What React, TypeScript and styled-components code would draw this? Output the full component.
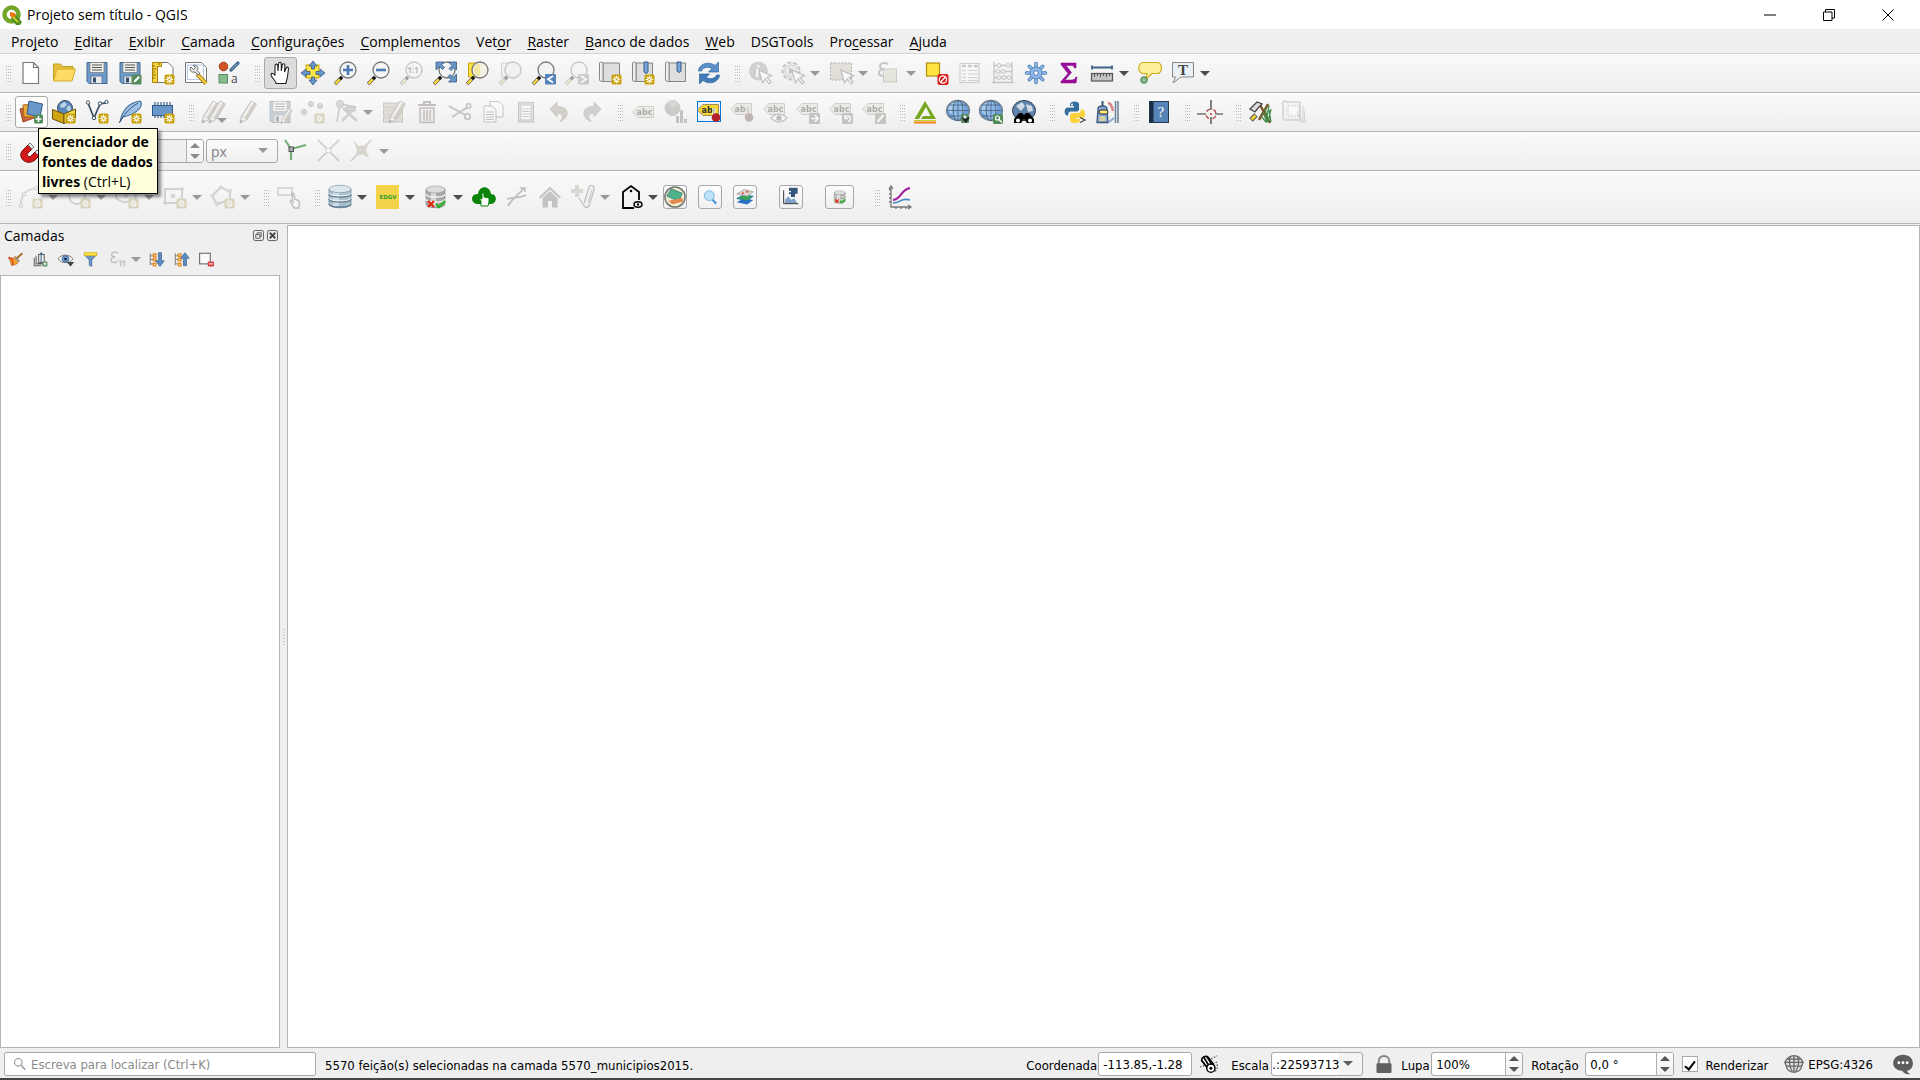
import React from "react";
import styled, { createGlobalStyle, css } from "styled-components";

const GlobalStyle = createGlobalStyle`
  *, *::before, *::after { box-sizing: border-box; }
  html, body, #root { height: 100%; }
  body { margin: 0; background: #efefef; color: #000; font-family: "Open Sans", "Noto Sans", sans-serif; font-size: 14px; overflow: hidden; }
  button, input, select { font: inherit; color: inherit; margin: 0; }
`;

/* ---------- icon artwork, drawn on a 24 x 24 grid ---------- */

const Star = () => (
  <g>
    <rect x="13.5" y="13.5" width="10" height="10" rx="1.5" fill="#c9a20a" />
    <path d="M18.5 14.8v7.4M14.8 18.5h7.4M16 16l5 5M21 16l-5 5" stroke="#fff" strokeWidth="1.2" />
    <circle cx="18.5" cy="18.5" r="1.1" fill="#c9a20a" />
  </g>
);
const Lens = ({ fill = "#f4f4f4" }: { fill?: string }) => (
  <g>
    <path d="M1 23l7-7" stroke="#555" strokeWidth="3.4" />
    <path d="M1.4 22.6l4.4-4.4" stroke="#ffd93b" strokeWidth="2.2" />
    <path d="M6 18l2-2" stroke="#111" strokeWidth="3" />
    <circle cx="14" cy="9" r="8" fill={fill} stroke="#777" strokeWidth="1.3" />
  </g>
);
const Arrow = ({ x = 0, y = 0 }: { x?: number; y?: number }) => (
  <path transform={`translate(${x} ${y})`} d="M11 9l3.400 13 2.800-4 4 5 2-2-4.200-4.600 4.600-1.600z" fill="#fff" stroke="#666" strokeWidth="1.1" />
);
const Floppy = () => (
  <g>
    <path d="M2 1.500h20v21H4l-2-2z" fill="#6f9bcb" stroke="#46698f" />
    <rect x="5" y="1.500" width="14" height="10" fill="#f1f1ee" stroke="#777" strokeWidth=".7" />
    <path d="M7 4h10M7 6.500h10M7 9h10" stroke="#555" />
    <rect x="6" y="15" width="11" height="7.500" fill="#e8e8e6" stroke="#46698f" strokeWidth=".7" />
    <rect x="8" y="16.500" width="3" height="5" fill="#35506f" />
  </g>
);
const Label = ({ text = "abc", fill = "#e3d9bb" }: { text?: string; fill?: string }) => (
  <g>
    <path d="M1 8.500l5-5h15.500v11H6L1 9.500z" fill={fill} stroke="#a08f60" />
    <text x="4.500" y="12" fontFamily="DejaVu Sans" fontWeight="700" fontSize="8" fill="#333">{text}</text>
  </g>
);
const Globe = () => (
  <g>
    <ellipse cx="12" cy="10.500" rx="11.500" ry="10" fill="#6d9fd8" stroke="#76838f" strokeWidth="1.3" />
    <ellipse cx="10.500" cy="9" rx="8" ry="7" fill="#a9cdf2" />
    <ellipse cx="12" cy="10.500" rx="5" ry="10" fill="#8fbbea" stroke="#47617b" strokeWidth="1" />
    <path d="M1 10.500h22M12 .5v20M3 5h18M3 16h18" stroke="#47617b" strokeWidth=".8" fill="none" />
  </g>
);
const MapSheet = () => (
  <g>
    <path d="M5 2h16.500v18.500H5z" fill="#dedede" stroke="#858585" />
    <path d="M5 20.500H3.500a2 2 0 0 1-2-2V2a2 2 0 0 1 3.500 0z" fill="#f0f0f0" stroke="#858585" />
  </g>
);
const Disk = () => (
  <g>
    <path d="M2 4v15c0 5 19 5 19 0V4z" fill="#a9a9a9" stroke="#777" strokeWidth=".6" />
    <path d="M7 5v17h5V5z" fill="#d8d8d8" />
    <path d="M2 9c0 4 19 4 19 0M2 14c0 4 19 4 19 0" fill="none" stroke="#f3f3f3" strokeWidth="1.300" />
    <ellipse cx="11.500" cy="4.500" rx="9.500" ry="3.500" fill="#dcdcdc" stroke="#999" strokeWidth=".6" />
    <path d="M4 16l6 6M10 16l-6 6" stroke="#df2b0b" strokeWidth="2.200" />
    <path d="M12 19l3 3 6-6" fill="none" stroke="#27b321" strokeWidth="2.400" />
  </g>
);
const Pencil = ({ x = 0 }: { x?: number }) => (
  <g transform={`translate(${x} 0)`}>
    <path d="M3 23l1.500-7L14 1l5.500 3-9 15z" fill="#d0bd82" stroke="#777" />
    <path d="M3 23l1.500-7 6 3z" fill="#eee" stroke="#777" strokeWidth=".8" />
    <path d="M3 23l.8-3.300 2 1.200z" fill="#333" />
    <path d="M6.500 17l9-15" stroke="#fff" strokeWidth="1.300" />
    <path d="M9 18.500l9-15" stroke="#8a7a50" strokeWidth="1.300" />
  </g>
);
const Tree = ({ up }: { up?: boolean }) => (
  <g>
    <path d="M2 2v19M2 6h5M2 12h5M2 19h5" stroke="#777" strokeWidth="1.500" fill="none" />
    <g fill="#fff" stroke="#e88b1c" strokeWidth="2.200">
      <rect x="7" y="3" width="4" height="4" /><rect x="7" y="10" width="4" height="4" /><rect x="7" y="18" width="4" height="4" />
    </g>
    <path d={up ? "M15 22V10h-4.500l7-9L24.500 10H20v12z" : "M15 1v13h-4.500l7 9 7-9H20V1z"} fill="#5b8ac0" stroke="#335a86" />
  </g>
);

const art: Record<string, React.ReactNode> = {
  page: <path d="M4 1.500h10.500l5 5v16H4zM14.500 1.500v5h5" fill="#fff" stroke="#777" strokeWidth="1.200" />,
  folder: <><path d="M1.500 20V3h7l2 2.500H21V9" fill="#e6c03c" stroke="#c09b22" /><path d="M1.500 20L5 8h18.500L20 20z" fill="#fddc63" stroke="#d4ac2b" /></>,
  save: <Floppy />,
  saveAs: <><Floppy /><rect x="13.500" y="13.500" width="10" height="10" rx="1.500" fill="#538b5b" /><path d="M15.500 21.500l1-2.500 4-4 1.500 1.500-4 4z" fill="#fff" /></>,
  layout: <><path d="M6 1.500h11l5 5v15H6z" fill="#fff" stroke="#777" /><path d="M1.500 1.500h9v4h-4v16h-5z" fill="#f5d13b" stroke="#a88309" /><path d="M2 5h2M2 8h3M2 11h2M2 14h3M2 17h2M8 2v2" stroke="#8a6d10" /><Star /></>,
  manager: <><path d="M1.500 1.500h16l5 5v15h-21z" fill="#fff" stroke="#777" /><rect x="3.500" y="4" width="16" height="14.500" fill="#fff" stroke="#b4c8e8" /><path d="M13 13l9 9.500" stroke="#a98414" strokeWidth="4" /><path d="M13.500 13.500l8.500 9" stroke="#f3d24a" strokeWidth="2" /><path d="M14 14l-3-3c-4 1-6-2-4-5l2.500 2.500 2-2L9 4.500c4-1.500 6 2 4 5l3 3z" fill="#e6e6e6" stroke="#666" /></>,
  style: <><circle cx="6.500" cy="5.500" r="4.300" fill="#cf5527" stroke="#a33f18" /><path d="M14 9l7-7" stroke="#46698f" strokeWidth="3.200" strokeLinecap="round" /><path d="M14.500 8.500l6-6" stroke="#7ea9d8" strokeWidth="1" /><rect x="2" y="13.500" width="8.500" height="8.500" fill="#86bb8b" stroke="#5c8a61" /><text x="14" y="22" fontFamily="Open Sans" fontSize="12" fill="#444">a</text></>,
  hand: <path d="M8 22.500c0-3-5-6-5-9 0-2 3-1 4 1V5c0-2.500 2.500-2.500 2.700 0L10 10l.5-7c.2-2.400 2.800-2.200 2.800 0v7l1-6c.5-2 2.700-1.500 2.600.5L16.500 11l1.700-4c.8-1.500 2.500-.8 2.300 1l-1 7.500c-.3 3-1.500 4-1.500 7z" fill="#fff" stroke="#222" strokeWidth="1.100" />,
  panSel: <><rect x="5" y="4" width="13" height="13" fill="#fde443" stroke="#c9a20a" /><path d="M12 0l4 5h-2.500v3h-3V5H8zM12 24l4-5h-2.500v-3h-3v3H8zM0 12l5-4v2.500h4v3H5V16zM24 12l-5-4v2.500h-4v3h4V16z" fill="#6a97c9" stroke="#355a83" strokeWidth=".8" /></>,
  zoomIn: <><Lens /><path d="M14 4v10M9 9h10" stroke="#4a7bb4" strokeWidth="2.600" /></>,
  zoomOut: <><Lens /><path d="M9 9h10" stroke="#4a7bb4" strokeWidth="2.600" /></>,
  zoom1: <><Lens /><text x="7.500" y="12" fontFamily="Open Sans" fontWeight="700" fontSize="8" fill="#555">1:1</text></>,
  zoomFull: <><Lens /><path d="M3 1h8L8.500 3.500l3 3-2 2-3-3L3 9zM23.500 1v8L21 6.500l-3 3-2-2 3-3L15.500 1zM23.500 21h-8l2.500-2.500-3-3 2-2 3 3 3.500-3.500z" fill="#6a97c9" stroke="#355a83" strokeWidth=".8" /></>,
  zoomSel: <><path d="M2.500 2h10v14h-10z" fill="#fde443" stroke="#c9a20a" /><Lens fill="#f4f1e4" /><path d="M14 3v12a6 6 0 0 1 0-12" fill="#f3e7a4" /></>,
  zoomLayer: <><path d="M2.500 2h10v14h-10z" fill="#e8e8e8" stroke="#999" /><Lens fill="#ececec" /></>,
  zoomPrev: <><Lens /><rect x="13" y="13" width="11" height="10.500" rx="1" fill="#5484bb" /><path d="M21 15l-5 3.200 5 3.200" stroke="#fff" strokeWidth="1.800" fill="none" /></>,
  zoomNext: <><Lens /><rect x="13" y="13" width="11" height="10.500" rx="1" fill="#8b8b8b" /><path d="M16 15l5 3.200-5 3.200" stroke="#fff" strokeWidth="1.800" fill="none" /></>,
  newMap: <><MapSheet /><Star /></>,
  newMark: <><MapSheet /><path d="M13 1h4v10l-2 1.500-2-1.500z" fill="#7ba7d8" stroke="#355a83" /><Star /></>,
  marks: <><MapSheet /><path d="M13 1h4v9l-2 1.500-2-1.500z" fill="#7ba7d8" stroke="#355a83" /></>,
  refresh: <><path d="M1.500 10C2 3 11-.5 18 4.500L21.500 1v10h-10l3.500-3.500C10 5 5 7 4.500 10z" fill="#5a8fc8" stroke="#2f659e" strokeWidth=".7" /><path d="M22.500 14C22 21 13 24.500 6 19.500L2.500 23V13h10L9 16.500c5 2.500 10 .5 10.500-2.500z" fill="#407bb8" stroke="#2f659e" strokeWidth=".7" /></>,
  identify: <><circle cx="10.500" cy="10" r="9.500" fill="#8d979f" /><text x="7" y="16" fontFamily="Liberation Serif" fontSize="17" fontWeight="700" fontStyle="italic" fill="#fff">i</text><Arrow /></>,
  action: <><circle cx="10" cy="10" r="8.500" fill="#eee" stroke="#777" strokeWidth="2" strokeDasharray="4 2" /><circle cx="10" cy="10" r="6" fill="#ddd" stroke="#888" /><path d="M8 6.500v7l6-3.500z" fill="#777" /><Arrow /></>,
  select: <><rect x="1.500" y="2" width="21" height="17" fill="#cabd92" stroke="#444" strokeDasharray="2 1.500" /><Arrow x={1} /></>,
  expr: <><path d="M11 3C8 1 3 2 3 5s3 3 5 3c-3 0-6 1-6 4s5 4 9 2" fill="none" stroke="#777" strokeWidth="2" /><rect x="6.500" y="8" width="13" height="13" fill="#d6cba2" stroke="#9c8f68" /></>,
  deselect: <><rect x="1.500" y="2" width="13" height="13" fill="#fde443" stroke="#b3920f" strokeWidth="1.200" /><rect x="12.500" y="13" width="11" height="11" rx="2" fill="#d81e1e" /><circle cx="18" cy="18.500" r="3.600" fill="none" stroke="#fff" strokeWidth="1.200" /><path d="M15.500 21l5-5" stroke="#fff" strokeWidth="1.200" /></>,
  table: <><rect x="2" y="2.500" width="19" height="19" fill="#fafafa" stroke="#888" /><path d="M4 5h4M10 5h4M16 5h4" stroke="#888" strokeWidth="2.500" /><path d="M4 9.500h4M10 9.500h10M4 13h4M10 13h10M4 16.500h4M10 16.500h10M4 19.500h4M10 19.500h10" stroke="#999" /></>,
  abacus: <><path d="M3 1v20M21 1v20M1 21.500h22M3 4.500h18M3 10.500h18M3 16.500h18" stroke="#777" strokeWidth="1.300" /><g fill="#eee" stroke="#777"><circle cx="8" cy="4.500" r="2" /><circle cx="17" cy="4.500" r="2" /><circle cx="7" cy="10.500" r="2" /><circle cx="12" cy="10.500" r="2" /><circle cx="8" cy="16.500" r="2" /><circle cx="13" cy="16.500" r="2" /><circle cx="18" cy="16.500" r="2" /></g></>,
  gear: <><g stroke="#4d7db6" strokeWidth="3.600" strokeLinecap="round"><path d="M12 2.500v19M2.500 12h19M5.300 5.300l13.400 13.400M18.700 5.300L5.300 18.700" /></g><g stroke="#8db7e8" strokeWidth="2" strokeLinecap="round"><path d="M12 2.500v19M2.500 12h19M5.300 5.300l13.400 13.400M18.700 5.300L5.300 18.700" /></g><circle cx="12" cy="12" r="6" fill="#8db7e8" stroke="#4d7db6" strokeWidth=".8" /><circle cx="12" cy="12" r="2.300" fill="#fff" stroke="#4d7db6" /></>,
  sigma: <path d="M4 2h15v5h-1.500c-.5-2-1.500-2.500-4-2.500H9l5.500 7L8 19h6.500c2.500 0 3.500-1 4.500-3h1l-1 6H4v-1.500l7-8L4 3.500z" fill="#9d0b9d" stroke="#7b087b" strokeWidth=".5" />,
  ruler: <><path d="M2 6.500h20M2 4.500v4M22 4.500v4" stroke="#3e6288" strokeWidth="1.800" /><rect x="1.500" y="12.500" width="21" height="7.500" fill="#c4c4c4" stroke="#555" strokeWidth="1.200" /><path d="M4.500 13v3M7.500 13v2M10.500 13v3M13.500 13v2M16.500 13v3M19.500 13v2" stroke="#555" /></>,
  tip: <><path d="M5 1.500h14c6 0 6 11 0 11h-5L7 19l2-6.500H5c-6 0-5-11 0-11z" fill="#fdef9b" stroke="#cda91c" strokeWidth="1.200" /><circle cx="6" cy="19" r="3.300" fill="#86bb8b" stroke="#4c7752" /></>,
  annot: <><path d="M1.500 1.500h21v14.500H10L2 22l2.500-6h-3z" fill="#e9f1f7" stroke="#888" /><text x="7" y="13.500" fontFamily="Liberation Serif" fontSize="15" fontWeight="700" fill="#444">T</text></>,

  source: <><path d="M1 9l10-3 4 12-11 4z" fill="#c8643c" stroke="#96441f" /><path d="M4 5l12-1 1 13H5z" fill="#eea83c" stroke="#a56a12" /><path d="M10 1l13.500 3-2.500 13-13-3z" fill="#6a97c9" stroke="#335a86" /><rect x="15" y="14.500" width="9" height="9" rx="1.500" fill="#538b5b" /><path d="M19.500 16v6M16.500 19h6" stroke="#fff" strokeWidth="1.600" /></>,
  geopkg: <><circle cx="13" cy="8" r="7.500" fill="#5c87b5" stroke="#34506e" /><path d="M8 5l4-3 3 2-2 3-4 1zM14 9l3-4 2 3-1 4z" fill="#bcd3ea" /><path d="M.5 9.500l11.500 4.500v9.500L.5 19z" fill="#d0a513" stroke="#6d540a" /><path d="M12 14l11.500-5v9L12 23.500z" fill="#f6dc50" stroke="#6d540a" /><Star /></>,
  shape: <><path d="M3 3l6 15L15 4c2-2 4 1 6-2" fill="none" stroke="#3b4f63" strokeWidth="1.700" /><g fill="#fff" stroke="#3b4f63"><circle cx="3" cy="2.500" r="1.700" /><circle cx="9" cy="18" r="1.700" /><circle cx="15" cy="3.500" r="1.700" /><circle cx="21.500" cy="2" r="1.700" /></g><Star /></>,
  feather: <><path d="M2 22C4 11 9 3 22 1c2 1 2 5-1 8-4 5-11 7-16 8z" fill="#9cc0e6" stroke="#466b92" strokeWidth="1.100" /><path d="M1 23C6 15 11 8 20 3" fill="none" stroke="#355a83" /><Star /></>,
  chip: <><path d="M4 2v16M7 2v16M10 2v16M13 2v16M16 2v16M19 2v16" stroke="#46698f" strokeWidth="1.300" /><rect x="1.500" y="5.500" width="20" height="10" fill="#6a97c9" stroke="#335a86" /><Star /></>,
  pencils: <><Pencil x={-3} /><Pencil x={4} /></>,
  pencil: <Pencil x={2} />,
  saveEdit: <><Floppy /><g transform="translate(11 8) scale(.68)"><Pencil /></g></>,
  points: <><g fill="#aaa" stroke="#777"><circle cx="3" cy="12" r="2.500" /><circle cx="10" cy="4" r="2.500" /><circle cx="19" cy="6" r="2.500" /></g><Star /></>,
  vertex: <><path d="M3 22L6 4l16 3" stroke="#888" strokeWidth="1.500" fill="none" /><path d="M9 8l14 13M20 9L8 21" stroke="#999" strokeWidth="2.800" /><g fill="#aaa" stroke="#777"><circle cx="6" cy="4" r="3.500" /><path d="M12 7h9v4h-9z" /></g></>,
  editRows: <><g fill="#cbbc8a" stroke="#8f8358"><rect x="1.500" y="3" width="19" height="5" /><rect x="1.500" y="10" width="19" height="5" /><rect x="1.500" y="17" width="19" height="5" /></g><g transform="translate(4 0)"><Pencil /></g></>,
  trash: <><path d="M3 5h18M9 4V2h6v2" stroke="#82655a" strokeWidth="2" fill="none" /><path d="M5 8h14v14.500H5zM9 10v11M12 10v11M15 10v11" fill="#ede4e0" stroke="#82655a" strokeWidth="1.500" /></>,
  cut: <><path d="M1 6l16 9M4 17L20 7" stroke="#777" strokeWidth="2" /><circle cx="19.500" cy="16.500" r="2.800" fill="none" stroke="#777" strokeWidth="1.700" /><circle cx="20.500" cy="6" r="2.300" fill="none" stroke="#777" strokeWidth="1.500" /></>,
  copy: <><path d="M9 1.500h9l4 4V17H9z" fill="#fff" stroke="#777" /><path d="M3 6h8l4 4v12H3z" fill="#fff" stroke="#777" /><path d="M5 12h8M5 14.500h8M5 17h8M5 19.500h8" stroke="#777" /></>,
  paste: <><rect x="4.500" y="2.500" width="15" height="19.500" fill="#ccc4a8" stroke="#777" /><rect x="7" y="5" width="10" height="15" fill="#fff" stroke="#888" /><path d="M9 1.500h6v3H9z" fill="#aaa" /><path d="M8.500 9h7M8.500 11.500h7M8.500 14h7M8.500 16.500h7" stroke="#888" /></>,
  undo: <path d="M3 9l7-7v4.500c7 0 11 3 10 8-1 4-4 6-7 7 4-5 3-8-3-8V17z" fill="#a89566" stroke="#857552" strokeWidth=".8" />,
  redo: <path d="M21 9l-7-7v4.500c-7 0-11 3-10 8 1 4 4 6 7 7-4-5-3-8 3-8V17z" fill="#999" stroke="#777" strokeWidth=".8" />,
  label: <g transform="translate(1 3)"><Label /></g>,
  diagram: <><circle cx="8.500" cy="8" r="7.500" fill="#808c78" stroke="#888" /><path d="M8.500 8L3 3a7 7 0 0 1 11 1z" fill="#c39b9b" /><path d="M12 23v-7h3v7M16 23V10h3v13M20 23v-4h3v4z" fill="#777" /></>,
  labelPin: <><rect x=".5" y="1.500" width="23" height="20" fill="#edf4fa" stroke="#0078d7" /><g transform="translate(0 1)"><Label text="ab" fill="#f6d72c" /></g><path d="M17 8v8" stroke="#fff" strokeWidth="3" /><path d="M17 8v8" stroke="#888" strokeWidth="1" /><circle cx="19" cy="17.500" r="4.300" fill="#b31f26" /></>,
  labelPin2: <><Label text="ab" /><path d="M18 7v9" stroke="#999" strokeWidth="2" /><circle cx="19" cy="17.500" r="4.300" fill="#8c4b4b" /></>,
  labelEye: <><Label /><path d="M8 18c5-5 11-5 16 0-5 5-11 5-16 0z" fill="#fff" stroke="#777" strokeWidth="1.300" /><circle cx="16" cy="18" r="2.700" fill="#666" /></>,
  labelMove: <><Label /><rect x="13" y="13" width="11" height="11" rx="1.500" fill="#777" /><path d="M15 18.500h7M19 15l3 3.500-3 3.500" stroke="#fff" strokeWidth="1.700" fill="none" /></>,
  labelTurn: <><Label /><rect x="13" y="13" width="11" height="11" rx="1.500" fill="#777" /><path d="M16 18a2.800 2.800 0 1 1 3 3.500M16 15v3.500h3" stroke="#fff" strokeWidth="1.500" fill="none" /></>,
  labelEdit: <><Label /><rect x="13" y="13" width="11" height="11" rx="1.500" fill="#857a58" /><path d="M15.500 22l6-7" stroke="#fff" strokeWidth="2.200" /></>,
  plane: <><path d="M12 1L1.500 19H6l7-12 4.500 9H10l-2 3h15z" fill="#78a81f" /><path d="M1 20h22v1H1z" fill="#c6cf29" /><path d="M1 21.500h22v2H1z" fill="#f08019" /></>,
  globeAdd: <><Globe /><rect x="15" y="14" width="8" height="9" rx="1.500" fill="#4f8958" /><path d="M15.500 17.500h8.500l-4.200 5.500z" fill="#222" /><path d="M19 15v4M17 17h4" stroke="#fff" /></>,
  globeFind: <><Globe /><rect x="14" y="14" width="10" height="10" rx="1.500" fill="#538b5b" /><circle cx="18.500" cy="18" r="2" fill="none" stroke="#fff" strokeWidth="1.200" /><path d="M20 19.500l3 3" stroke="#fff" strokeWidth="1.400" /></>,
  binoc: <><ellipse cx="12" cy="10.500" rx="11.500" ry="10" fill="#5f83a8" stroke="#263f5a" /><path d="M4 6l6-4 3 4-4 5zM14 4l6 2 1 5-5 1z" fill="#d0dbe6" /><path d="M7 13h3l2 2 2-2h3l5 6v4h-7l-3-4-3 4H2v-4z" fill="#000" /><circle cx="6" cy="20.500" r="2" fill="#fff" /><circle cx="18" cy="20.500" r="2" fill="#fff" /></>,
  python: <><path d="M8 2.500c3-2 8-1 8 1.500v5c0 2-1 2.500-3 2.500H8c-2 0-3 1-3 4-4 1-5-8 0-8h6V6H7V4z" fill="#366f9e" /><path d="M16 22c-3 2-9 1-9-1.500v-4C7 14 8 13 10 13h5c2 0 3-1 3-4 5 0 6 9 1 9h-6v1h4v2z" fill="#fbd13c" /><circle cx="9" cy="4.500" r="1" fill="#fff" /><path d="M17 17.500l5 2.500-5 2.500" fill="none" stroke="#444" strokeWidth="1.300" /></>,
  robot: <><path d="M6.500 7V1" stroke="#3b5876" strokeWidth="2" /><path d="M2 9c0-4 9-4 9 0l1 13.500H1z" fill="#8da9d9" stroke="#3b5876" strokeWidth="1.300" /><rect x="3" y="10" width="9" height="4" rx="2" fill="#ffed80" stroke="#222" /><path d="M3.500 17.500h6M3.500 20h6" stroke="#ffed80" strokeWidth="1.500" /><path d="M12 3c3 0 4 4 5 8" stroke="#d88484" strokeWidth="2.500" fill="none" /><path d="M19.500 1v22M22 1v22" stroke="#70859c" strokeWidth="1.600" /><path d="M13 22l5-4" stroke="#8da9c9" strokeWidth="2" /></>,
  help: <><rect x="2.500" y="1.500" width="19" height="21" fill="#5684b6" stroke="#233a52" /><rect x="2.500" y="1.500" width="4" height="21" fill="#1c2d43" /><text x="10.500" y="17" fontFamily="Liberation Serif" fontSize="15" fill="#fff">?</text></>,
  cross: <><circle cx="13" cy="14" r="5" fill="none" stroke="#b75050" strokeWidth="1.500" strokeDasharray="4 3.850" strokeDashoffset="-2" /><path d="M13 0v10M13 17v7M-1 14h9M17 14h8" stroke="#333" strokeWidth="1.200" /><circle cx="13" cy="14" r="1" fill="#b33" /></>,
  hammer: <><path d="M10 20c3-6 6-10 9-16M11 5l10 18" stroke="#835627" strokeWidth="2.500" /><path d="M1 9l7-7 5 2-4 4-3 4z" fill="#ddd" stroke="#444" strokeWidth="1.300" /><path d="M2 20l5-5" stroke="#555" strokeWidth="5" /><path d="M2.500 19.500l4-4" stroke="#e8d332" strokeWidth="3" /><path d="M14 12l4 10M16 8l3 14M20 5l-3 18M22 9l-3 13M12 16l5 6M20 10l2 12" stroke="#3f8a48" strokeWidth="1.300" /></>,
  scroll: <><path d="M5 2h13v18H5H3a2 2 0 0 1-2-2V5a2 2 0 0 1 4-3z" fill="#eee" stroke="#999" strokeWidth="1.400" /><rect x="6" y="6" width="11" height="10" fill="#fff" stroke="#999" strokeDasharray="2 1" /><path d="M18 5v17M21 6v17M15 12l5 10M22 10l1 13" stroke="#999" /></>,

  magnet: <><path d="M4 11l5-5 4 4-4 4c-2 2 1 5 3 3l4-4 4 4-4 4c-8 7-19-3-12-10z" fill="#d31818" stroke="#7c0b0b" /><path d="M9 6l2-2 4 4-2 2zM16 13l2-2 4 4-2 2z" fill="#eee" stroke="#777" /></>,
  trace: <><path d="M1 1l6 9v11M7 10l15-4" fill="none" stroke="#75ae78" strokeWidth="2.200" /><rect x="5" y="8" width="4.500" height="4.500" fill="#aaa" stroke="#555" /></>,
  crossing: <><path d="M1 1l21 21M22 1L1 22" stroke="#888" strokeWidth="1.700" /><circle cx="11.500" cy="11.500" r="2.500" fill="#fff" stroke="#999" /></>,
  selfSnap: <><path d="M1 22L21 1" stroke="#888" strokeWidth="1.500" /><path d="M3 2l6 5 7-1 3-3-3 8 3 8-6-4-8 3 2-8z" fill="#b3a47a" /></>,
  arc: <><path d="M2 22C1 12 5 5 17 3" fill="none" stroke="#999" strokeWidth="1.700" /><g fill="#fff" stroke="#888"><circle cx="2" cy="21" r="1.800" /><circle cx="5" cy="9" r="1.800" /><circle cx="17" cy="3" r="1.800" /></g><Star /></>,
  circle: <><circle cx="10" cy="11" r="8" fill="none" stroke="#999" strokeWidth="2" /><Star /></>,
  ellipse: <><ellipse cx="11" cy="11" rx="10" ry="6" fill="none" stroke="#999" strokeWidth="2" /><circle cx="11" cy="11" r="2" fill="#aaa" /><Star /></>,
  rect: <><rect x="2" y="4" width="17" height="14" fill="none" stroke="#999" strokeWidth="2" /><rect x="8" y="9" width="4" height="4" fill="#aaa" /><circle cx="19" cy="4" r="1.800" fill="#999" /><circle cx="2" cy="18" r="1.800" fill="#999" /><Star /></>,
  poly: <><path d="M10 2l9 5v8l-13 4-5-8z" fill="none" stroke="#999" strokeWidth="2" /><g fill="#bbb" stroke="#999"><circle cx="10" cy="2.500" r="1.600" /><circle cx="19" cy="6" r="1.600" /><circle cx="1.500" cy="11" r="1.600" /><circle cx="6" cy="19" r="1.600" /></g><Star /></>,
  pick: <><rect x="1" y="3" width="14" height="7" fill="#fafafa" stroke="#888" strokeWidth="1.400" /><path d="M13 16c1-2 2 0 3 1l-1-8c1-2 2-1 2 1l1 4 4 2c1 3 0 5 0 7h-5z" fill="#fff" stroke="#666" strokeWidth="1.400" /><path d="M15 8v3" stroke="#c33" /></>,
  db: <><path d="M1 4v15c0 5 22 5 22 0V4z" fill="#a9bfcd" stroke="#60798a" strokeWidth=".7" /><path d="M5 5v17h6V5z" fill="#cfdde6" /><path d="M1 9c0 4 22 4 22 0M1 14c0 4 22 4 22 0M1 19c0 4 22 4 22 0" fill="none" stroke="#637d90" strokeWidth="1.300" /><path d="M1 7.800c0 4 22 4 22 0M1 12.800c0 4 22 4 22 0" fill="none" stroke="#eef4f8" strokeWidth="1" /><ellipse cx="12" cy="4" rx="11" ry="3.700" fill="#dde7ee" stroke="#8195a3" strokeWidth=".7" /></>,
  edgv: <><rect width="23" height="24" fill="#f2d34a" /><text x="3.500" y="14" fontFamily="DejaVu Sans" fontSize="5.500" fontWeight="700" fill="#2ca02c">EDGV</text></>,
  disk: <Disk />,
  cloud: <><path d="M6 19c-8 0-8-11 0-10 1-9 12-9 13 0 7 0 6 10 0 10z" fill="#0b840b" /><path d="M9 21v-5l-2-3 3 1V8h2v4l5 1v4l-1 4z" fill="#fff" stroke="#0b840b" /></>,
  split: <><path d="M3 21C8 12 14 10 19 3M2 14c6-2 14-1 19-4" fill="none" stroke="#666" strokeWidth="1.700" /><path d="M15 3h5v4" fill="none" stroke="#666" strokeWidth="1.500" /></>,
  home: <path d="M12 1.500L1 12l1.500 1.500L12 4.500l9.500 9L23 12zM4.500 13v9.500H10V16h4v6.500h5.500V13L12 6z" fill="#777" />,
  addPen: <><path d="M4 0h4v4h4v4H8v4H4V8H0V4h4z" fill="#b3a98c" /><path d="M8 13l6 9c2 1 3 0 4-1l5-16c1-4-3-6-5-3l-5 16" fill="#efece4" stroke="#666" strokeWidth="1.200" /><path d="M17 18l4-13" stroke="#777" /></>,
  tag: <><path d="M20 15V7l-8-6-8 6v16h11" fill="none" stroke="#000" strokeWidth="1.800" /><circle cx="12" cy="6" r="1.300" fill="#000" /><ellipse cx="19" cy="19.500" rx="4" ry="2.700" fill="#fff" stroke="#000" strokeWidth="1.500" /><circle cx="19" cy="19.500" r="1.200" fill="#000" /></>,
  plot: <><path d="M3 1v21h20M1 5h2M1 9h2M1 13h2M1 17h2M8 22v2M13 22v2M18 22v2M1 4l2-3 2 3M20 20l3 2-3 2" fill="none" stroke="#777" strokeWidth="1.300" /><path d="M5 15c9-1 7-10 17-12" fill="none" stroke="#a2179b" strokeWidth="2" /><path d="M5 18c8 0 8-6 17-3" fill="none" stroke="#4688c2" strokeWidth="1.700" /></>,
  terrain: <><circle cx="12" cy="12" r="11" fill="#eeedce" stroke="#777" strokeWidth="1.700" /><path d="M3 11l5-8 12 5-4 9z" fill="#4db289" stroke="#2c6b70" strokeWidth=".7" /><path d="M5 16l15-3 1 4-12 3z" fill="#e3874d" /></>,
  search: <><path d="M15 15l6 7" stroke="#4a94df" strokeWidth="3.400" /><circle cx="10" cy="9" r="8" fill="#bde2fa" stroke="#79b5e0" strokeWidth="1.500" /></>,
  layers: <><path d="M1 19l9-5 13 2-8 6z" fill="#2870c4" /><path d="M1 14l9-5 13 2-8 6z" fill="#39a259" stroke="#1f70b6" /><path d="M1 8l10-6 12 3-8 6z" fill="#ddd5d0" stroke="#999" /><circle cx="9" cy="7" r="1.300" fill="#d33" /><circle cx="15" cy="5" r="1.300" fill="#d33" /></>,
  histo: <><path d="M1 2v20h22" fill="none" stroke="#333" strokeWidth="1.500" /><path d="M3 21v-5l5-5 4 5 5-2 4 7z" fill="#7fa3c8" /><path d="M9-2h13v9h-4v5h-6V8H9V5h3V3H9z" fill="#34557c" /></>,

  brush: <><path d="M13 11l10-9" stroke="#a66924" strokeWidth="3" /><path d="M1 8l7 2 4-3 6 7-4 5-8 3z" fill="#f3a52e" stroke="#b4541c" /><path d="M1 9l6 3 1 9" stroke="#e54b2c" strokeWidth="2.500" fill="none" /><path d="M11 9l6 6" stroke="#6a97c9" strokeWidth="2" /></>,
  addGroup: <><path d="M2 9v13h11M5 6v13h12M9 4h9v13H9z" fill="none" stroke="#666" strokeWidth="1.700" /><path d="M13 1v15M10 4l3-3 3 3" stroke="#355a83" strokeWidth="1.500" fill="none" /><rect x="15" y="15" width="8" height="8" rx="1" fill="#538b5b" /><path d="M19 16v6M16 19h6" stroke="#fff" strokeWidth="1.400" /></>,
  eye: <><path d="M0 11C5 3 19 3 24 11c-5 8-19 8-24 0z" fill="#f2f2f2" stroke="#777" strokeWidth="1.500" /><circle cx="12" cy="11" r="5.500" fill="#6a97c9" stroke="#355a83" /><circle cx="12" cy="11" r="2" fill="#112" /><path d="M14 16h12l-6 7z" fill="#444" /></>,
  funnel: <><path d="M2 4h20l-8 9v10l-4-2v-8z" fill="#6a97c9" stroke="#335a86" /><path d="M2 1h20v5H2z" fill="#fde443" stroke="#c9a20a" /></>,
  exprFilter: <><path d="M11 2C8-1 1 0 1 4s4 4 6 4c-3 0-7 1-7 5s6 5 10 2" fill="none" stroke="#777" strokeWidth="2.200" /><path d="M12 15v-2h11v10h-3v-6h-3v6h-3v-8z" fill="#999" /></>,
  expand: <Tree />,
  collapse: <Tree up />,
  remove: <><rect x="1" y="2" width="17" height="17" fill="#fafafa" stroke="#666" strokeWidth="1.700" /><rect x="14" y="15" width="10" height="8" rx="1.500" fill="#d94040" /><path d="M16 19h6" stroke="#fff" strokeWidth="1.600" /></>,
  extents: <><path d="M2 7c0-4 6-7 9-4l7 9c1 5-5 8-8 5z" fill="#fff" stroke="#000" strokeWidth="2" /><path d="M5 3l8 13M9 2l7 11M2 7l7 9" stroke="#000" strokeWidth="2.200" /><circle cx="14.500" cy="17.500" r="5.500" fill="#fff" stroke="#000" strokeWidth="2" /><circle cx="14.500" cy="17.500" r="2" fill="#000" /><path d="M15 5l8-4M0 16l6-2M21 9c3 4 3 9-1 13" stroke="#555" strokeWidth="1.700" strokeDasharray="2 2" fill="none" /></>,
  lock: <><path d="M5 12V8c0-9 14-9 14 0v4" fill="none" stroke="#888" strokeWidth="2.600" /><rect x="2" y="11" width="20" height="13" rx="1.500" fill="#606060" /></>,
  crs: <><path d="M12 2c-4 0-8 2-11 8l3 8c3 5 13 5 16 0l3-8c-3-6-7-8-11-8z" fill="#ddd" stroke="#666" strokeWidth="1.500" /><path d="M1 10h22M3 14.500h18M12 2v20M8 2.500C5 8 7 17 10 21M16 2.500C19 8 17 17 14 21M4 6h16" fill="none" stroke="#666" strokeWidth="1.500" /></>,
  message: <><path d="M12 1c15 0 15 18 5 19 0 1 1 3 4 4-5 1-8-1-10-4C-4 20-3 1 12 1z" fill="#5c5c5c" /><g fill="#fff"><circle cx="7" cy="10.500" r="1.700" /><circle cx="12" cy="10.500" r="1.700" /><circle cx="17" cy="10.500" r="1.700" /></g></>,
  find: <><circle cx="9" cy="9" r="6.500" fill="none" stroke="#999" strokeWidth="2" /><path d="M14 14l7 8" stroke="#999" strokeWidth="2.500" /></>,
  min: <path d="M0 12h24" stroke="#000" strokeWidth="2" />,
  restore: <path d="M1 6h17v17H1zM5 6V1h18v17h-5" fill="none" stroke="#000" strokeWidth="2" />,
  close: <path d="M1 1l22 22M23 1L1 23" stroke="#000" strokeWidth="2" />,
  dockFloat: <><rect x="1" y="1" width="22" height="22" rx="4" fill="none" stroke="#555" strokeWidth="2" /><path d="M6 10h9v8H6zM9 10V6h9v8h-3" fill="none" stroke="#555" strokeWidth="2" /></>,
  dockClose: <><rect x="1" y="1" width="22" height="22" rx="4" fill="none" stroke="#555" strokeWidth="2" /><path d="M6 6l12 12M18 6L6 18" stroke="#444" strokeWidth="4" /></>,
};

const Svg = styled.svg<{ $size: number }>`
  width: ${(p) => p.$size}px;
  height: ${(p) => p.$size}px;
  flex: none;
  display: block;
  overflow: visible;
`;
const Icon = ({ name, size = 24 }: { name: string; size?: number }) => (
  <Svg $size={size} viewBox="0 0 24 24" fill="none" aria-hidden="true">{art[name]}</Svg>
);

/* ---------- window frame ---------- */

const Window = styled.div`
  height: 100vh;
  display: flex;
  flex-direction: column;
  border-bottom: 2px solid #454545;
`;
const TitleBar = styled.header`
  display: flex;
  align-items: center;
  height: 29px;
  padding-left: 2px;
  background: #fff;
  flex: none;
`;
const Logo = styled.svg`
  width: 20px;
  height: 20px;
  margin-right: 5px;
`;
const WindowTitle = styled.h1`
  margin: 0;
  flex: 1;
  font-size: 14px;
  font-weight: 400;
`;
const CaptionButton = styled.button`
  width: 59px;
  height: 28px;
  padding: 0;
  border: 0;
  background: none;
  display: grid;
  place-items: center;
`;
const MenuBar = styled.nav`
  display: flex;
  align-items: center;
  height: 25px;
  padding: 2px 3px 0;
  border-bottom: 1px solid #d4d4d4;
  flex: none;
`;
const MenuItem = styled.button`
  padding: 0 8px;
  border: 0;
  background: none;
  line-height: 22px;
  white-space: nowrap;
  u { text-underline-offset: 2px; text-decoration-skip-ink: none; }
`;

/* ---------- toolbars ---------- */

const Toolbar = styled.div<{ $tall?: boolean }>`
  display: flex;
  align-items: center;
  gap: 8px;
  height: ${(p) => (p.$tall ? 53 : 39)}px;
  padding-left: 5px;
  background: linear-gradient(#fafafa, #eeeeee);
  border-bottom: 1px solid #b6b6b6;
  flex: none;
`;
const Group = styled.div`
  display: flex;
  align-items: center;
`;
const Grip = styled.span`
  width: 6px;
  height: 18px;
  margin-right: 4px;
  background:
    repeating-linear-gradient(#f5f5f5 0 2px, transparent 2px 3px),
    repeating-linear-gradient(90deg, transparent 0 1px, #b9b9b9 1px 2px);
`;
const ToolButton = styled.button<{ $menu?: boolean; $look?: "down" | "hover" }>`
  position: relative;
  display: flex;
  align-items: center;
  gap: 5px;
  width: ${(p) => (p.$menu ? 48 : 33)}px;
  height: 32px;
  padding: 0 0 0 3px;
  border: 1px solid transparent;
  border-radius: 3px;
  background: none;
  color: #4c4c4c;
  ${(p) => p.$look === "down" && css`background: #dcdcdc; border-color: #a9a9a9;`}
  ${(p) => p.$look === "hover" && css`background: #fdfdfd; border-color: #a9a9a9;`}
  &:disabled { color: #999; }
  &:disabled > svg { opacity: 0.38; filter: grayscale(0.6); }
`;
const Caret = styled.span`
  width: 0;
  height: 0;
  flex: none;
  border: 5px solid transparent;
  border-top-color: currentColor;
  border-bottom: 0;
`;
const CornerCaret = styled(Caret)`
  position: absolute;
  right: 3px;
  bottom: 4px;
`;
const Boxed = styled.div`
  display: flex;
  gap: 11px;
  margin-right: 12px;
`;
const BoxButton = styled.button<{ $wide?: boolean; $apart?: boolean }>`
  display: grid;
  place-items: center;
  width: ${(p) => (p.$wide ? 29 : 24)}px;
  height: 24px;
  margin-left: ${(p) => (p.$apart ? 11 : 0)}px;
  padding: 0;
  border: 1px solid #a8a8a8;
  border-radius: 3px;
  background: linear-gradient(#fdfdfd, #f0f0f0);
`;

type Tool = { n: string; t: string; off?: boolean; menu?: boolean; look?: "down" | "hover"; corner?: boolean };
const on = (n: string, t: string, more: Partial<Tool> = {}): Tool => ({ n, t, ...more });
const off = (n: string, t: string, more: Partial<Tool> = {}): Tool => ({ n, t, off: true, ...more });

const Tools = ({ items }: { items: Tool[] }) => (
  <>
    {items.map((i) => (
      <ToolButton key={i.t} aria-label={i.t} disabled={i.off} $menu={i.menu} $look={i.look}>
        <Icon name={i.n} />
        {i.menu && <Caret />}
        {i.corner && <CornerCaret />}
      </ToolButton>
    ))}
  </>
);
const ToolGroup = ({ items }: { items: Tool[] }) => (
  <Group><Grip /><Tools items={items} /></Group>
);

const mainBar: Tool[][] = [
  [on("page", "Novo"), on("folder", "Abrir"), on("save", "Salvar"), on("saveAs", "Salvar como"), on("layout", "Novo layout"), on("manager", "Gerenciador de layouts"), on("style", "Gerenciador de estilos")],
  [on("hand", "Mover mapa", { look: "down" }), on("panSel", "Mover para a seleção"), on("zoomIn", "Aproximar"), on("zoomOut", "Afastar"), off("zoom1", "Resolução nativa"), on("zoomFull", "Ver tudo"), on("zoomSel", "Ver seleção"), off("zoomLayer", "Ver camada"), on("zoomPrev", "Zoom anterior"), off("zoomNext", "Próximo zoom"), on("newMap", "Nova vista do mapa"), on("newMark", "Novo favorito"), on("marks", "Favoritos"), on("refresh", "Atualizar")],
  [off("identify", "Identificar"), off("action", "Executar ação", { menu: true }), off("select", "Selecionar", { menu: true }), off("expr", "Selecionar por expressão", { menu: true }), on("deselect", "Desfazer seleção"), off("table", "Tabela de atributos"), off("abacus", "Calculadora de campo"), on("gear", "Caixa de ferramentas"), on("sigma", "Estatísticas"), on("ruler", "Medir", { menu: true }), on("tip", "Dicas do mapa"), on("annot", "Anotação", { menu: true })],
];
const layerBar: Tool[][] = [
  [on("source", "Gerenciador de fontes de dados", { look: "hover" }), on("geopkg", "Novo GeoPackage"), on("shape", "Novo shapefile"), on("feather", "Nova camada SpatiaLite"), on("chip", "Nova camada temporária")],
  [off("pencils", "Edições atuais", { corner: true }), off("pencil", "Alternar edição"), off("saveEdit", "Salvar edições"), off("points", "Adicionar feição"), off("vertex", "Ferramenta de vértices", { menu: true }), off("editRows", "Modificar atributos"), off("trash", "Excluir"), off("cut", "Recortar"), off("copy", "Copiar"), off("paste", "Colar"), off("undo", "Desfazer"), off("redo", "Refazer")],
  [off("label", "Rótulos"), off("diagram", "Diagramas"), on("labelPin", "Destacar rótulos"), off("labelPin2", "Fixar rótulos"), off("labelEye", "Mostrar rótulos"), off("labelMove", "Mover rótulo"), off("labelTurn", "Girar rótulo"), off("labelEdit", "Editar rótulo")],
  [on("plane", "Terreno"), on("globeAdd", "Adicionar serviço"), on("globeFind", "Buscar serviço"), on("binoc", "Metabusca")],
  [on("python", "Terminal Python"), on("robot", "Depurador")],
  [on("help", "Conteúdo da ajuda")],
  [on("cross", "Captura de coordenadas")],
  [on("hammer", "Ferramentas GRASS"), off("scroll", "Região GRASS")],
];

/* ---------- fields ---------- */

const Field = styled.div<{ $w: number; $muted?: boolean }>`
  display: flex;
  width: ${(p) => p.$w}px;
  height: 24px;
  border: 1px solid #a8a8a8;
  border-radius: 3px;
  background: ${(p) => (p.$muted ? "#efefef" : "#fff")};
  overflow: hidden;
  flex: none;
`;
const FieldInput = styled.input`
  flex: 1;
  min-width: 0;
  width: 0;
  padding: 0 4px;
  border: 0;
  outline: 0;
  background: none;
  &::placeholder { color: #8a8a8a; opacity: 1; }
`;
const Steppers = styled.span<{ $muted?: boolean }>`
  display: flex;
  flex-direction: column;
  width: 17px;
  border-left: 1px solid #b0b0b0;
  background: linear-gradient(#fdfdfd, #f1f1f1);
  color: ${(p) => (p.$muted ? "#8b8b8b" : "#555")};
`;
const Step = styled.button`
  flex: 1;
  padding: 0;
  border: 0;
  background: none;
  display: grid;
  place-items: center;
  color: inherit;
  &:first-child > span { transform: rotate(180deg); }
`;
const ComboBox = styled.div<{ $w: number; $plain?: boolean }>`
  position: relative;
  width: ${(p) => p.$w}px;
  height: 24px;
  flex: none;
  color: ${(p) => (p.$plain ? "#000" : "#808080")};
  > span {
    position: absolute;
    right: 10px;
    top: 9px;
    color: ${(p) => (p.$plain ? "#606060" : "#999")};
    pointer-events: none;
  }
`;
const Select = styled.select<{ $plain?: boolean }>`
  width: 100%;
  height: 100%;
  padding: 0 0 0 ${(p) => (p.$plain ? 0 : 4)}px;
  appearance: none;
  border: 1px solid #a8a8a8;
  border-radius: 3px;
  opacity: 1;
  background: ${(p) => (p.$plain ? "linear-gradient(90deg, #fff 67px, #f3f3f3 67px)" : "linear-gradient(#fbfbfb, #f0f0f0)")};
`;
const Spacer = styled.span<{ $w: number }>`
  width: ${(p) => p.$w}px;
  flex: none;
`;
const Spin = ({ id, value, w, muted }: { id: string; value: string; w: number; muted?: boolean }) => (
  <Field $w={w} $muted={muted}>
    <FieldInput id={id} aria-label={muted ? "Tolerância" : undefined} defaultValue={value} disabled={muted} />
    <Steppers $muted={muted}>
      <Step aria-label="Aumentar" disabled={muted}><Caret /></Step>
      <Step aria-label="Diminuir" disabled={muted}><Caret /></Step>
    </Steppers>
  </Field>
);

/* ---------- tooltip ---------- */

const TipAnchor = styled.div`
  position: relative;
  height: 0;
  z-index: 5;
`;
const Tooltip = styled.div`
  position: absolute;
  left: 38px;
  top: -4px;
  width: 120px;
  padding: 3px 3px 1px;
  border: 1px solid #000;
  background: #ffffdc;
  box-shadow: 3px 3px 3px rgba(0, 0, 0, 0.45);
  line-height: 20px;
  white-space: nowrap;
`;

/* ---------- work area ---------- */

const Work = styled.main`
  flex: 1;
  min-height: 0;
  display: flex;
  padding-top: 1px;
`;
const Dock = styled.section`
  width: 280px;
  display: flex;
  flex-direction: column;
  flex: none;
`;
const DockHead = styled.div`
  display: flex;
  align-items: center;
  gap: 3px;
  height: 20px;
  padding: 0 2px 0 4px;
`;
const DockTitle = styled.h2`
  margin: 0;
  flex: 1;
  font-size: 14px;
  font-weight: 400;
`;
const DockButton = styled.button`
  padding: 0;
  border: 0;
  background: none;
`;
const DockTools = styled.div`
  display: flex;
  align-items: center;
  height: 30px;
  padding: 0 0 2px 3px;
`;
const DockTool = styled.button<{ $menu?: boolean }>`
  display: flex;
  align-items: center;
  justify-content: center;
  gap: 5px;
  width: ${(p) => (p.$menu ? 41 : 25)}px;
  height: 24px;
  padding: 0 0 0 ${(p) => (p.$menu ? 4 : 0)}px;
  border: 0;
  background: none;
  &:disabled { color: #999; }
  &:disabled > svg { opacity: 0.4; }
`;
const TreeView = styled.div`
  flex: 1;
  border: 1px solid #b4b4b4;
  background: #fff;
`;
const Splitter = styled.div`
  width: 7px;
  display: grid;
  place-items: center;
  flex: none;
  &::after { content: ""; width: 2px; height: 16px; background: repeating-linear-gradient(#ccc 0 1px, transparent 1px 3px); }
`;
const Canvas = styled.section`
  flex: 1;
  border: 1px solid #b4b4b4;
  background: #fff;
`;

/* ---------- status bar ---------- */

const StatusBar = styled.footer`
  display: flex;
  align-items: center;
  height: 30px;
  padding: 2px 7px 0 4px;
  flex: none;
  font-family: "DejaVu Sans Condensed", "DejaVu Sans", sans-serif;
  font-stretch: condensed;
  font-size: 13px;
  label, p { padding-top: 2px; }
`;
const SearchField = styled(Field)`
  align-items: center;
  padding-left: 8px;
`;
const Message = styled.p`
  margin: 0 0 0 9px;
  flex: 1;
  white-space: nowrap;
`;
const StatusItem = styled.div<{ $w: number }>`
  display: flex;
  align-items: center;
  justify-content: space-between;
  width: ${(p) => p.$w}px;
  margin-left: 8px;
  flex: none;
  white-space: nowrap;
`;
const StatusButton = styled.button`
  display: flex;
  align-items: center;
  gap: 4px;
  margin-left: 8px;
  padding: 0;
  border: 0;
  background: none;
  white-space: nowrap;
`;
const CheckBox = styled.input`
  appearance: none;
  width: 16px;
  height: 16px;
  border: 1px solid #aaa;
  background: #fff;
  display: grid;
  place-items: center;
  &:checked::after { content: ""; width: 6px; height: 11px; border: solid #000; border-width: 0 2px 2px 0; transform: rotate(38deg); }
`;

const menus: [string, string, string][] = [
  ["Pro", "j", "eto"], ["", "E", "ditar"], ["", "E", "xibir"], ["", "C", "amada"], ["", "C", "onfigurações"], ["", "C", "omplementos"],
  ["Vet", "o", "r"], ["", "R", "aster"], ["", "B", "anco de dados"], ["", "W", "eb"], ["DSGTools", "", ""], ["Pro", "c", "essar"], ["", "A", "juda"],
];
const dockTools = [["brush", "Estilo"], ["addGroup", "Adicionar grupo"], ["eye", "Temas do mapa"], ["funnel", "Filtrar legenda"], ["exprFilter", "Filtrar por expressão"], ["expand", "Expandir tudo"], ["collapse", "Recolher tudo"], ["remove", "Remover camada"]];

export default function App() {
  return (
    <Window>
      <GlobalStyle />
      <TitleBar>
        <Logo viewBox="0 0 20 20" aria-hidden="true">
          <circle cx="9.500" cy="9.500" r="7" fill="none" stroke="#71a62b" strokeWidth="4.500" />
          <path d="M10 10l3-1 7 8-2 3h-4l-5-6z" fill="#569022" />
          <path d="M8 7l5 1 1 3-3 2-3-2z" fill="#ee7913" />
          <path d="M11 12l5 5" stroke="#e9dd25" strokeWidth="1.500" />
        </Logo>
        <WindowTitle>Projeto sem título - QGIS</WindowTitle>
        <CaptionButton aria-label="Minimizar"><Icon name="min" size={12} /></CaptionButton>
        <CaptionButton aria-label="Restaurar"><Icon name="restore" size={12} /></CaptionButton>
        <CaptionButton aria-label="Fechar"><Icon name="close" size={12} /></CaptionButton>
        <Spacer $w={3} />
      </TitleBar>
      <MenuBar>
        {menus.map(([a, b, c]) => <MenuItem key={a + b + c}>{a}{b && <u>{b}</u>}{c}</MenuItem>)}
      </MenuBar>

      <Toolbar>{mainBar.map((g, i) => <ToolGroup key={i} items={g} />)}</Toolbar>
      <Toolbar>{layerBar.map((g, i) => <ToolGroup key={i} items={g} />)}</Toolbar>
      <TipAnchor>
        <Tooltip role="tooltip"><b>Gerenciador de<br />fontes de dados<br />livres</b> (Ctrl+L)</Tooltip>
      </TipAnchor>
      <Toolbar>
        <Group>
          <Grip />
          <Tools items={[on("magnet", "Ativar aderência")]} />
          <Spacer $w={80} />
          <Spin id="tol" value="" w={76} muted />
          <Spacer $w={2} />
          <ComboBox $w={72}>
            <Select aria-label="Unidade" disabled><option>px</option></Select>
            <Caret />
          </ComboBox>
          <Spacer $w={2} />
          <Tools items={[on("trace", "Edição topológica"), off("crossing", "Aderir à interseção"), off("selfSnap", "Traçado", { menu: true })]} />
        </Group>
      </Toolbar>
      <Toolbar $tall>
        <ToolGroup items={[off("arc", "Arco", { menu: true }), off("circle", "Círculo", { menu: true }), off("ellipse", "Elipse", { menu: true }), off("rect", "Retângulo", { menu: true }), off("poly", "Polígono", { menu: true })]} />
        <ToolGroup items={[off("pick", "Escolher feição")]} />
        <Group>
          <Grip />
          <Tools items={[on("db", "Bancos de dados", { menu: true }), on("edgv", "EDGV", { menu: true }), on("disk", "Validar banco", { menu: true }), on("cloud", "Serviços BDGEx"), off("split", "Aquisição"), off("home", "Edificação"), off("addPen", "Mão livre", { menu: true }), on("tag", "Inspecionar", { menu: true })]} />
          <Boxed>
            <BoxButton aria-label="Terreno"><Icon name="terrain" size={22} /></BoxButton>
            <BoxButton aria-label="Pesquisar"><Icon name="search" size={15} /></BoxButton>
            <BoxButton aria-label="Carregar camadas"><Icon name="layers" size={18} /></BoxButton>
            <BoxButton $apart aria-label="Histograma"><Icon name="histo" size={16} /></BoxButton>
            <BoxButton $apart $wide aria-label="Regras"><Icon name="disk" size={14} /></BoxButton>
          </Boxed>
        </Group>
        <ToolGroup items={[on("plot", "Perfil do terreno")]} />
      </Toolbar>

      <Work>
        <Dock>
          <DockHead>
            <DockTitle>Camadas</DockTitle>
            <DockButton aria-label="Flutuar painel"><Icon name="dockFloat" size={11} /></DockButton>
            <DockButton aria-label="Fechar painel"><Icon name="dockClose" size={11} /></DockButton>
          </DockHead>
          <DockTools>
            {dockTools.map(([n, t]) => (
              <DockTool key={n} aria-label={t} $menu={n === "exprFilter"} disabled={n === "exprFilter"}>
                <Icon name={n} size={15} />
                {n === "exprFilter" && <Caret />}
              </DockTool>
            ))}
          </DockTools>
          <TreeView />
        </Dock>
        <Splitter />
        <Canvas aria-label="Mapa" />
      </Work>

      <StatusBar>
        <SearchField $w={312}>
          <Icon name="find" size={14} />
          <FieldInput aria-label="Localizar" placeholder="Escreva para localizar (Ctrl+K)" />
        </SearchField>
        <Message>5570 feição(s) selecionadas na camada 5570_municipios2015.</Message>
        <StatusItem $w={166}>
          <label htmlFor="coord">Coordenada</label>
          <Field $w={94}><FieldInput id="coord" defaultValue="-113.85,-1.28" /></Field>
        </StatusItem>
        <StatusButton aria-label="Extensão"><Icon name="extents" size={18} /></StatusButton>
        <Spacer $w={5} />
        <StatusItem $w={132}>
          <label htmlFor="scale">Escala</label>
          <ComboBox $w={92} $plain>
            <Select id="scale" $plain><option>.:22593713</option></Select>
            <Caret />
          </ComboBox>
        </StatusItem>
        <Spacer $w={4} />
        <StatusButton aria-label="Bloquear escala"><Icon name="lock" size={18} /></StatusButton>
        <StatusItem $w={122}>
          <label htmlFor="mag">Lupa</label>
          <Spin id="mag" value="100%" w={92} />
        </StatusItem>
        <StatusItem $w={143}>
          <label htmlFor="rot">Rotação</label>
          <Spin id="rot" value="0,0 °" w={89} />
        </StatusItem>
        <StatusItem $w={86}>
          <CheckBox id="render" type="checkbox" defaultChecked />
          <label htmlFor="render">Renderizar</label>
        </StatusItem>
        <Spacer $w={8} />
        <StatusButton><Icon name="crs" size={20} />EPSG:4326</StatusButton>
        <Spacer $w={12} />
        <StatusButton aria-label="Mensagens"><Icon name="message" size={20} /></StatusButton>
      </StatusBar>
    </Window>
  );
}
